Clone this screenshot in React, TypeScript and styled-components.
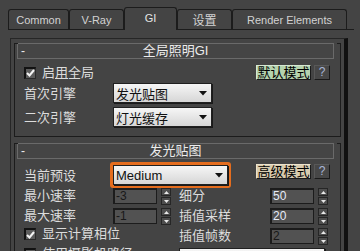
import React from "react";
import styled, { createGlobalStyle, css } from "styled-components";

const GlobalStyle = createGlobalStyle`
  html, body { margin: 0; padding: 0; background: #444444; }
  body {
    width: 360px; height: 251px; overflow: hidden;
    font-family: "Liberation Sans", "Noto Sans CJK SC", sans-serif;
    color: #dcdcdc;
  }
`;

const Page = styled.div`
  width: 360px;
  height: 251px;
  overflow: hidden;
  background: #444444;
`;

const TabBar = styled.div`
  display: flex;
  align-items: flex-end;
  height: 29px;
  width: 346px;
  margin-left: 8px;
  border-bottom: 1px solid #1c1c1c;
`;

const Tab = styled.div<{ $w: number; $active?: boolean }>`
  box-sizing: border-box;
  width: ${(p) => p.$w}px;
  height: ${(p) => (p.$active ? 23 : 20)}px;
  margin-bottom: ${(p) => (p.$active ? -1 : 0)}px;
  border: 1px solid #1c1c1c;
  border-bottom: none;
  border-radius: 3px 3px 0 0;
  background: #444444;
  display: flex;
  align-items: center;
  justify-content: center;
  padding-bottom: ${(p) => (p.$active ? 3 : 0)}px;
  font-size: 11px;
  color: ${(p) => (p.$active ? "#e4e4e4" : "#d2d2d2")};
`;

const TabCjk = styled.span`
  font-size: 12px;
`;

const Panel = styled.div`
  box-sizing: border-box;
  width: 338px;
  height: 213px;
  margin: 8px 0 0 10px;
  border-top: 1px solid #262626;
  border-left: 1px solid #262626;
  border-right: 4px solid #101010;
  padding: 0 3px;
  overflow: hidden;
`;

const Rollout = styled.div<{ $mt: number }>`
  position: relative;
  margin-top: ${(p) => p.$mt}px;
  border-left: 1px solid #1c1c1c;
  border-right: 1px solid #1c1c1c;
  border-bottom: 1px solid #1c1c1c;
  &::before,
  &::after {
    content: "";
    position: absolute;
    top: 0;
    width: 3px;
    height: 1px;
    background: #1c1c1c;
  }
  &::before { left: 0; }
  &::after { right: 0; }
`;

const Header = styled.div`
  box-sizing: border-box;
  height: 16px;
  margin: -8px 6px 0 2px;
  border: 1px solid #6a6a6a;
  background: #454545;
  display: grid;
  grid-template-columns: 1fr auto 1fr;
  align-items: center;
  font-size: 13px;
  color: #ececec;
  line-height: 14px;
`;

const Minus = styled.span`
  padding-left: 3px;
  font-size: 12px;
`;

const Body = styled.div<{ $pad: string }>`
  display: flex;
  flex-direction: column;
  padding: ${(p) => p.$pad};
`;

const Row = styled.div<{ $h: number; $mt?: number; $top?: boolean }>`
  display: flex;
  align-items: ${(p) => (p.$top ? "flex-start" : "center")};
  height: ${(p) => p.$h}px;
  margin-top: ${(p) => p.$mt ?? 0}px;
`;

const Label = styled.span<{ $w?: number }>`
  display: inline-block;
  width: ${(p) => (p.$w ? `${p.$w}px` : "auto")};
  flex: none;
  font-size: 13px;
  line-height: 15px;
  color: #dcdcdc;
  white-space: nowrap;
`;

const CheckWrap = styled.label`
  display: flex;
  align-items: center;
  gap: 6px;
  font-size: 13px;
  line-height: 12px;
  color: #dcdcdc;
  white-space: nowrap;
`;

const Box = styled.span`
  box-sizing: border-box;
  width: 12px;
  height: 12px;
  background: #5c5c5c;
  border-top: 2px solid #121212;
  border-left: 2px solid #121212;
  border-right: 1px solid #2a2a2a;
  border-bottom: 1px solid #2a2a2a;
  display: flex;
  align-items: center;
  justify-content: center;
  flex: none;
`;

const Spacer = styled.div`
  flex: 1;
`;

const Btn = styled.div<{ $tone: "green" | "tan" | "dark"; $top?: boolean }>`
  box-sizing: border-box;
  height: 15px;
  display: flex;
  align-items: center;
  justify-content: center;
  font-size: 13px;
  line-height: 13px;
  border-style: solid;
  border-width: 1px;
  ${(p) =>
    p.$top &&
    css`
      align-self: flex-start;
      margin-top: 2px;
    `}
  ${(p) =>
    p.$tone === "green"
      ? css`
          width: 55px;
          background: #b5d3ae;
          color: #000;
          border-color: #d6e8d2 #1a1a1a #1a1a1a #d6e8d2;
        `
      : p.$tone === "tan"
      ? css`
          width: 55px;
          background: #d8cbae;
          color: #000;
          border-color: #ece2cc #1a1a1a #1a1a1a #ece2cc;
        `
      : css`
          width: 16px;
          margin-left: 3px;
          background: #474747;
          color: #a9b6d6;
          font-size: 12px;
          border-color: #585858 #1a1a1a #1a1a1a #585858;
        `}
`;

const Select = styled.div<{ $w: number }>`
  box-sizing: border-box;
  width: ${(p) => p.$w}px;
  height: 20px;
  background: linear-gradient(#f6f6f6, #d6d6d6);
  border: 1px solid #202020;
  box-shadow: 1px 1px 0 #1a1a1a;
  display: flex;
  align-items: center;
  padding: 0 4px 0 2px;
  font-size: 13px;
  color: #111;
  flex: none;
`;

const SelectText = styled.span`
  flex: 1;
  white-space: nowrap;
  overflow: hidden;
`;

const Focus = styled.div`
  box-sizing: border-box;
  width: 121px;
  height: 26px;
  border: 3px solid #e56d1e;
  border-radius: 3px;
  flex: none;
  display: flex;
`;

const Grid = styled.div`
  display: grid;
  grid-template-columns: 155px 1fr;
  grid-auto-rows: 20px;
`;

const Field = styled.div`
  display: flex;
  align-items: flex-start;
`;

const Input = styled.div<{ $light?: boolean }>`
  box-sizing: border-box;
  width: 44px;
  height: 16px;
  background: #525252;
  border: 1px solid #1c1c1c;
  border-top-width: 2px;
  border-left-width: 2px;
  font-size: 12px;
  line-height: 13px;
  padding-left: 1px;
  color: ${(p) => (p.$light ? "#e6ecf8" : "#181818")};
  flex: none;
`;

const Spin = styled.div`
  display: flex;
  flex-direction: column;
  gap: 1px;
  margin-left: 4px;
  width: 10px;
`;

const SpinBtn = styled.div`
  box-sizing: border-box;
  height: 8px;
  background: #4e4e4e;
  border: 1px solid #262626;
  display: flex;
  align-items: center;
  justify-content: center;
`;

const Check = () => (
  <Box>
    <svg width="9" height="8" viewBox="0 0 9 8">
      <path d="M1 4 L3.5 6.5 L8 1" stroke="#f4f4f4" strokeWidth="2" fill="none" />
    </svg>
  </Box>
);

const Arrow = () => (
  <svg width="8" height="5" viewBox="0 0 8 5">
    <polygon points="0,0 8,0 4,4.5" fill="#111" />
  </svg>
);

const Spinner = () => (
  <Spin>
    <SpinBtn>
      <svg width="5" height="3" viewBox="0 0 5 3">
        <polygon points="0,3 5,3 2.5,0" fill="#e8e8e8" />
      </svg>
    </SpinBtn>
    <SpinBtn>
      <svg width="5" height="3" viewBox="0 0 5 3">
        <polygon points="0,0 5,0 2.5,3" fill="#e8e8e8" />
      </svg>
    </SpinBtn>
  </Spin>
);

const NumField = ({ label, lw, value, light }: { label: string; lw: number; value: string; light?: boolean }) => (
  <Field>
    <Label $w={lw}>{label}</Label>
    <Input $light={light}>{value}</Input>
    <Spinner />
  </Field>
);

export default function App() {
  return (
    <Page>
      <GlobalStyle />
      <TabBar>
        <Tab $w={61}>Common</Tab>
        <Tab $w={55}>V-Ray</Tab>
        <Tab $w={53} $active>GI</Tab>
        <Tab $w={55}>
          <TabCjk>设置</TabCjk>
        </Tab>
        <Tab $w={115}>Render Elements</Tab>
      </TabBar>
      <Panel>
        <Rollout $mt={12}>
          <Header>
            <Minus>-</Minus>
            <span>全局照明GI</span>
            <span />
          </Header>
          <Body $pad="6px 10px 9px 9px">
            <Row $h={15}>
              <CheckWrap>
                <Check />
                <span>
                  启<u>用</u>全局
                </span>
              </CheckWrap>
              <Spacer />
              <Btn $tone="green">默认模式</Btn>
              <Btn $tone="dark">?</Btn>
            </Row>
            <Row $h={20} $mt={3}>
              <Label $w={89}>首次引擎</Label>
              <Select $w={99}>
                <SelectText>发光贴图</SelectText>
                <Arrow />
              </Select>
            </Row>
            <Row $h={20} $mt={4}>
              <Label $w={89}>二次引擎</Label>
              <Select $w={99}>
                <SelectText>灯光缓存</SelectText>
                <Arrow />
              </Select>
            </Row>
          </Body>
        </Rollout>
        <Rollout $mt={14}>
          <Header>
            <Minus>-</Minus>
            <span>发光贴图</span>
            <span />
          </Header>
          <Body $pad="3px 10px 0 9px">
            <Row $h={26}>
              <Label $w={86}>当前预设</Label>
              <Focus>
                <Select $w={115}>
                  <SelectText>Medium</SelectText>
                  <Arrow />
                </Select>
              </Focus>
              <Spacer />
              <Btn $tone="tan" $top>高级模式</Btn>
              <Btn $tone="dark" $top>?</Btn>
            </Row>
            <Grid>
              <NumField label="最小速率" lw={89} value="-3" />
              <NumField label="细分" lw={91} value="50" light />
              <NumField label="最大速率" lw={89} value="-1" />
              <NumField label="插值采样" lw={91} value="20" light />
              <Row $h={20} $top>
                <CheckWrap>
                  <Check />
                  <span>显示计算相位</span>
                </CheckWrap>
              </Row>
              <NumField label="插值帧数" lw={91} value="2" />
              <Row $h={20} $top>
                <CheckWrap>
                  <Check />
                  <span>使用摄影机路径</span>
                </CheckWrap>
              </Row>
              <Field>
                <Select $w={146}>
                  <SelectText>显示直接光</SelectText>
                </Select>
              </Field>
            </Grid>
          </Body>
        </Rollout>
      </Panel>
    </Page>
  );
}
